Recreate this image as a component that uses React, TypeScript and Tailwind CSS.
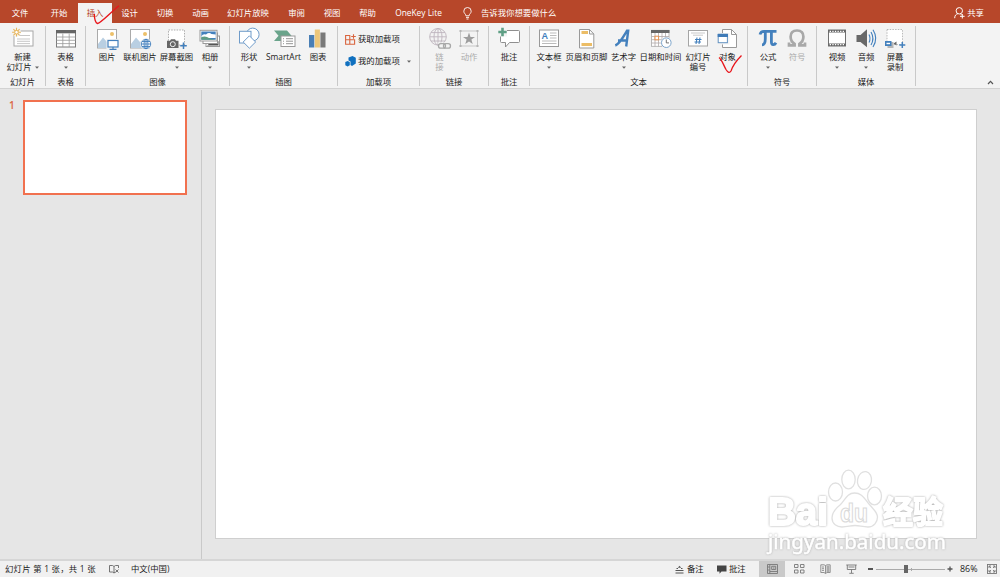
import type { ReactNode } from "react";

const GRAY = "#7b7b7b";
const BLUE = "#4380bd";

function Icon({ children }: { children: ReactNode }) {
  return (
    <svg width="32" height="24" viewBox="0 0 32 24" fill="none" className="block shrink-0">
      {children}
    </svg>
  );
}

function Mountain() {
  return (
    <>
      <path d="M7 17 L12 10.5 L16 15 L18 13.5 L21 17 V21 H7Z" fill="#b9cfe2" />
      <circle cx="21" cy="7" r="2" fill="#ecc069" />
    </>
  );
}

const icons = {
  newSlide: (
    <Icon>
      <rect x="7" y="4" width="19" height="15" fill="#fff" stroke="#a8a8a8" />
      <path d="M12 8.5H23M10 12H23M10 14.3H23M10 16.6H23" stroke="#b9b9b9" strokeWidth=".8" />
      <circle cx="9.5" cy="5.2" r="4.5" fill="#f3f3f3" />
      <path d="M9.5 .8V9.6M5.1 5.2H13.9M6.4 2.1L12.6 8.3M12.6 2.1L6.4 8.3" stroke="#e8b55a" strokeWidth="1.1" />
      <circle cx="9.5" cy="5.2" r="1.8" fill="#fff" stroke="#e8b55a" />
    </Icon>
  ),
  table: (
    <Icon>
      <rect x="6.5" y="3.5" width="19" height="16.5" fill="#fff" stroke={GRAY} />
      <path d="M6 3H26V6.3H6Z" fill="#666" />
      <path d="M6.5 10H25.5M6.5 13.3H25.5M6.5 16.6H25.5M12.8 6.5V20M19.2 6.5V20" stroke="#999" strokeWidth=".8" />
    </Icon>
  ),
  picture: (
    <Icon>
      <rect x="6.5" y="2.5" width="19" height="18.5" fill="#fff" stroke="#aaa" />
      <Mountain />
      <rect x="15.5" y="12" width="13" height="11" fill="#f3f3f3" />
      <rect x="17" y="13.5" width="10" height="6.5" fill="#fff" stroke={BLUE} strokeWidth="1.2" />
      <path d="M22 20V22M18.5 22.3H25.5" stroke={BLUE} strokeWidth="1.2" />
    </Icon>
  ),
  online: (
    <Icon>
      <rect x="6.5" y="2.5" width="19" height="18.5" fill="#fff" stroke="#aaa" />
      <Mountain />
      <circle cx="22" cy="17" r="5.8" fill="#f3f3f3" />
      <g stroke={BLUE} strokeWidth=".9" transform="translate(0 -.5)">
        <circle cx="22" cy="17.5" r="4.7" fill="#fff" />
        <ellipse cx="22" cy="17.5" rx="2" ry="4.7" />
        <path d="M17.3 17.5H26.7M18 15H26M18 20H26M22 12.8V22.2" />
      </g>
    </Icon>
  ),
  screenshot: (
    <Icon>
      <rect x="7.5" y="3" width="16" height="15" fill="#fff" stroke="#999" strokeDasharray="1.5 1.2" strokeWidth=".8" />
      <path d="M6 13.7H9L10 12.3H14L15 13.7H17.5V21H6Z" fill="#666" />
      <circle cx="11.8" cy="17.2" r="2.5" fill="#666" stroke="#f3f3f3" />
      <path d="M22.5 15.5V22M19.2 18.8H25.8" stroke={BLUE} strokeWidth="1.5" />
    </Icon>
  ),
  album: (
    <Icon>
      <rect x="12" y="9" width="13.5" height="10.5" fill="#fff" stroke="#999" />
      <path d="M13 18.5L18 14.5L21 17L24.5 14V18.5Z" fill="#555" />
      <rect x="9" y="6" width="14.5" height="10.5" fill="#fff" stroke="#999" />
      <rect x="6" y="3.3" width="17" height="10.7" fill="#fff" stroke="#999" />
      <rect x="7.3" y="4.5" width="14.4" height="8.2" fill={BLUE} />
      <path d="M7.5 9Q9 6.5 12 7.5Q15 4.8 17.5 7L21.7 7.5V11H7.3Z" fill="#fff" />
      <path d="M7.3 12.7V10Q12 8.5 15 11Q18 12 21.7 12.7Z" fill="#5f9b83" />
    </Icon>
  ),
  shapes: (
    <Icon>
      <g fill="#fff" stroke="#6f9bc9">
        <circle cx="19.7" cy="7.5" r="6.4" />
        <rect x="6.5" y="4.3" width="11.5" height="11.7" />
        <path d="M16.4 8.8L22.6 15L16.4 21.2L10.2 15Z" />
      </g>
    </Icon>
  ),
  smartArt: (
    <Icon>
      <path d="M6 3.5H19L23.5 8.7L19 14H6L10.5 8.7Z" fill="#6aa48b" />
      <rect x="13" y="9" width="14" height="10.5" fill="#fff" stroke="#999" />
      <path d="M15 11.7H16M18 11.7H25M15 14.2H16M18 14.2H25M15 16.7H16M18 16.7H25" stroke="#888" strokeWidth=".9" />
    </Icon>
  ),
  chart: (
    <Icon>
      <path d="M7 8H12.3V20.5H7Z" fill="#4a7fb5" />
      <path d="M12.8 2.5H17.9V20.5H12.8Z" fill="#edc77a" />
      <path d="M18.4 5.5H23.5V20.5H18.4Z" fill="#797979" />
    </Icon>
  ),
  link: (
    <Icon>
      <g stroke="#bdb4bd" strokeWidth=".9">
        <circle cx="14" cy="9.8" r="8.3" />
        <ellipse cx="14" cy="9.8" rx="4" ry="8.3" />
        <path d="M5.7 9.8H22.3M7 5.6H21M7 14H21M14 1.5V18.1" />
      </g>
      <path d="M14 15.5H27V22H14Z" fill="#f3f3f3" />
      <rect x="14.5" y="16.7" width="7" height="4.4" rx="2.2" stroke="#a8a8a8" strokeWidth="1.3" />
      <rect x="19.5" y="16.7" width="7" height="4.4" rx="2.2" stroke="#a8a8a8" strokeWidth="1.3" />
    </Icon>
  ),
  action: (
    <Icon>
      <rect x="7.5" y="4" width="17" height="15" stroke="#bbb" strokeWidth=".8" />
      <path d="M6.5 3h2v2h-2zM23.5 3h2v2h-2zM6.5 18h2v2h-2zM23.5 18h2v2h-2z" fill="#b5b5b5" />
      <path transform="translate(0 -.7)" d="M16 6.3L17.5 10.6H22L18.4 13.3L19.7 17.7L16 15.1L12.3 17.7L13.6 13.3L10 10.6H14.5Z" fill="#9d9d9d" />
    </Icon>
  ),
  comment: (
    <Icon>
      <path d="M8.5 3.5H25.5Q26.5 3.5 26.5 4.5V14.5Q26.5 15.5 25.5 15.5H16.5L12.5 20V15.5H8.5Q7.5 15.5 7.5 14.5V4.5Q7.5 3.5 8.5 3.5Z" fill="#fff" stroke="#8f8f8f" />
      <path d="M5 0H14V9.5H5Z" fill="#f3f3f3" />
      <path d="M9.5 .8V9.2M5.3 5H13.7" stroke="#5f9f85" strokeWidth="2.6" />
    </Icon>
  ),
  textBox: (
    <Icon>
      <rect x="6.5" y="3" width="19" height="16.5" fill="#fff" stroke="#999" />
      <text x="8.5" y="12.3" fontSize="9" fontFamily="Liberation Sans" fill={BLUE} fontWeight="bold">A</text>
      <path d="M17 6H23.5M17 8.5H23.5M17 11H23.5M9 14H23.5M9 16.5H23.5" stroke="#aaa" strokeWidth=".8" />
    </Icon>
  ),
  header: (
    <Icon>
      <path d="M8.5 2.5H18.5L22.8 7V21H8.5Z" fill="#fff" stroke="#999" />
      <path d="M18.5 2.5V7H22.8" stroke="#999" />
      <path d="M10.5 4H17V7H10.5ZM10.5 16H21V19H10.5Z" fill="#ecbd66" />
    </Icon>
  ),
  wordArt: (
    <Icon>
      <path d="M7.3 18.5C11.5 17 15.5 9.5 19 3.7H20.2L18.2 19.5M10 13.5H19" stroke={BLUE} strokeWidth="2.4" />
    </Icon>
  ),
  date: (
    <Icon>
      <rect x="6.5" y="3.3" width="17.5" height="16" fill="#fff" stroke="#aaa" strokeWidth=".8" />
      <path d="M6 3H24.5V6H6Z" fill="#666" />
      <path d="M6.5 9.5H24M6.5 12.7H24M6.5 16H24M10 6V19.5M13.5 6V19.5M17 6V19.5M20.5 6V19.5" stroke="#b0a8a8" strokeWidth=".8" />
      <rect x="10" y="9.2" width="3.6" height="3.6" fill="#fff" stroke="#e7924f" />
      <circle cx="21.3" cy="15.7" r="5.6" fill="#f3f3f3" />
      <circle cx="21.3" cy="15.7" r="4.8" fill="#fff" stroke="#7ea6cc" />
      <path d="M21.3 12.5V15.9H24" stroke="#666" strokeWidth=".9" />
    </Icon>
  ),
  slideNumber: (
    <Icon>
      <rect x="6.5" y="3.5" width="19" height="15.5" fill="#fff" stroke="#a5a5a5" />
      <path d="M9 6H23M11 8.2H21" stroke="#bbb" strokeWidth=".8" />
      <path d="M15 10.5L14 17M18 10.5L17 17M13 12.5H19.5M12.5 15H19" stroke={BLUE} strokeWidth="1.1" />
    </Icon>
  ),
  object: (
    <Icon>
      <path d="M10.5 2.5H19.5L24.5 7.5V20.5H10.5Z" fill="#fff" stroke="#999" />
      <path d="M19.5 2.5V7.5H24.5" stroke="#999" />
      <rect x="5.5" y="7" width="11" height="9.5" fill="#fff" stroke="#f3f3f3" strokeWidth="2" />
      <rect x="6.2" y="7.3" width="9.2" height="8.4" fill="#fff" stroke="#6291c0" />
      <path d="M5.7 6.9H16V10H5.7Z" fill="#3f7bb8" />
    </Icon>
  ),
  pi: (
    <Icon>
      <path d="M8 7.5C8.6 4.8 9.8 4.3 12 4.3H24.5M13.3 4.5V11.5C13.3 16 12.5 17.9 10 17.9M19.4 4.5V15C19.4 18.3 22.5 18.5 24 15.8" stroke={BLUE} strokeWidth="2.8" />
    </Icon>
  ),
  omega: (
    <Icon>
      <path transform="translate(0 -.5)" d="M8 16V18.9H13.6V17.4C10.5 15.4 9.6 13 9.6 10.2C9.6 6.3 12.1 4 16 4S22.4 6.3 22.4 10.2C22.4 13 21.5 15.4 18.4 17.4V18.9H24V16" stroke="#a9a9a9" strokeWidth="2.7" />
    </Icon>
  ),
  video: (
    <Icon>
      <rect x="7.5" y="3" width="17" height="16" fill="#fff" stroke="#707070" />
      <path d="M7.5 4.3H24.5M7.5 17.7H24.5" stroke="#666" strokeWidth="2.5" />
      <path d="M8.7 4.3H24M8.7 17.7H24" stroke="#fff" strokeWidth="1.3" strokeDasharray="1.3 1.3" />
    </Icon>
  ),
  audio: (
    <Icon>
      <path d="M6.5 8H10.5L17 2.3V20.3L10.5 15H6.5Z" fill="#686868" />
      <path d="M19 7.5Q21 11.5 19 15.5M21 5Q24.8 11.5 21 18M23 2.8Q28.5 11.5 23 20" stroke={BLUE} strokeWidth="1.1" />
    </Icon>
  ),
  record: (
    <Icon>
      <rect x="8" y="2.5" width="15.5" height="15" fill="#fff" stroke="#aaa" strokeDasharray="1.5 1.2" strokeWidth=".8" />
      <path d="M8.5 15H14.5V21H8.5Z" fill="#b5b5b5" />
      <path d="M6 14H12.5V19H6Z" fill={BLUE} />
      <path d="M7.5 15.8H11V17.2H7.5Z" fill="#fff" />
      <path d="M14.5 16.5L17.5 14.5V18.5Z" fill="#666" />
      <path d="M23.3 15V21M20.3 18H26.3" stroke={BLUE} strokeWidth="1.5" />
    </Icon>
  ),
};

function Caret() {
  return (
    <svg width="4" height="3" viewBox="0 0 4 3" className="inline-block shrink-0">
      <path d="M0 .4H4L2 2.7Z" fill="#666" />
    </svg>
  );
}

type ToolProps = {
  w: string;
  icon: ReactNode;
  label: string;
  sub?: string;
  caret?: boolean;
  muted?: boolean;
};

function Tool({ w, icon, label, sub, caret, muted }: ToolProps) {
  return (
    <button className={`flex shrink-0 flex-col items-center whitespace-nowrap ${w} ${muted ? "text-[#ababab]" : "text-[#222]"}`}>
      {icon}
      <span className="mt-px h-[10px] leading-[10px]">{label}</span>
      <span className="flex h-[10px] items-center gap-[3px] leading-[10px]">
        {sub}
        {caret && <Caret />}
      </span>
    </button>
  );
}

function Group({ w, label, children }: { w: string; label: string; children: ReactNode }) {
  return (
    <section className={`flex h-[60px] shrink-0 flex-col border-r border-[#c9c9c9] ${w}`}>
      <div className="flex h-[50px] shrink-0 justify-center pt-px">{children}</div>
      <div className="flex h-[12px] shrink-0 items-center justify-center pt-px text-[#222]">{label}</div>
    </section>
  );
}

function Ribbon() {
  return (
    <div className="flex h-[66px] shrink-0 items-start border-b border-[#d2d2d2] bg-[#f3f3f3] pt-[3px]">
      <Group w="w-[46px]" label="幻灯片">
        <Tool w="w-[44px]" icon={icons.newSlide} label="新建" sub="幻灯片" caret />
      </Group>
      <Group w="w-[40px]" label="表格">
        <Tool w="w-[38px]" icon={icons.table} label="表格" caret />
      </Group>
      <Group w="w-[144px]" label="图像">
        <Tool w="w-[32px]" icon={icons.picture} label="图片" />
        <Tool w="w-[34px]" icon={icons.online} label="联机图片" />
        <Tool w="w-[39px]" icon={icons.screenshot} label="屏幕截图" caret />
        <Tool w="w-[28px]" icon={icons.album} label="相册" caret />
      </Group>
      <Group w="w-[108px]" label="插图">
        <Tool w="w-[29px]" icon={icons.shapes} label="形状" caret />
        <Tool w="w-[40px]" icon={icons.smartArt} label="SmartArt" />
        <Tool w="w-[29px]" icon={icons.chart} label="图表" />
      </Group>
      <Group w="w-[82px]" label="加载项">
        <div className="flex w-full flex-col gap-[11px] pt-[7px] pl-[7px] text-[#222]">
          <div className="flex h-[11px] items-center gap-[2px]">
            <svg width="11" height="11" viewBox="0 0 11 11" fill="none" stroke="#d9653f" strokeWidth="1.1">
              <path d="M.6 1.5H4.8V10.2H.6ZM.6 5.8H9.6V10.2H4.8M8.5 .3V4.8M6.2 2.5H10.8" />
            </svg>
            <span>获取加载项</span>
          </div>
          <div className="flex h-[11px] items-center gap-[2px]">
            <svg width="11" height="11" viewBox="0 0 11 11">
              <path d="M3.5 1.5L7.5 0L10.8 1.8V7.5L7 10L5.5 9V5.5L3.5 4.5Z" fill="#1070bf" />
              <path d="M.3 6L2.6 5L4.8 6V9.3L2.6 10.5L.3 9.3Z" fill="#1070bf" />
            </svg>
            <span>我的加载项</span>
            <span className="ml-[5px] flex"><Caret /></span>
          </div>
        </div>
      </Group>
      <Group w="w-[69px]" label="链接">
        <Tool w="w-[30px]" icon={icons.link} label="链" sub="接" muted />
        <Tool w="w-[29px]" icon={icons.action} label="动作" muted />
      </Group>
      <Group w="w-[41px]" label="批注">
        <Tool w="w-[38px]" icon={icons.comment} label="批注" />
      </Group>
      <Group w="w-[218px]" label="文本">
        <Tool w="w-[29px]" icon={icons.textBox} label="文本框" caret />
        <Tool w="w-[46px]" icon={icons.header} label="页眉和页脚" />
        <Tool w="w-[28px]" icon={icons.wordArt} label="艺术字" caret />
        <Tool w="w-[46px]" icon={icons.date} label="日期和时间" />
        <Tool w="w-[29px]" icon={icons.slideNumber} label="幻灯片" sub="编号" />
        <Tool w="w-[30px]" icon={icons.object} label="对象" />
      </Group>
      <Group w="w-[69px]" label="符号">
        <Tool w="w-[30px]" icon={icons.pi} label="公式" caret />
        <Tool w="w-[28px]" icon={icons.omega} label="符号" muted />
      </Group>
      <Group w="w-[99px]" label="媒体">
        <Tool w="w-[29px]" icon={icons.video} label="视频" caret />
        <Tool w="w-[29px]" icon={icons.audio} label="音频" caret />
        <Tool w="w-[29px]" icon={icons.record} label="屏幕" sub="录制" />
      </Group>
      <svg width="7" height="5" viewBox="0 0 7 5" className="mt-[54px] mr-[6px] ml-auto" fill="none">
        <path d="M1 4L3.5 1.3L6 4" stroke="#555" strokeWidth="1.2" />
      </svg>
    </div>
  );
}

const tabs = [
  { label: "文件", w: "w-[40px]" },
  { label: "开始", w: "w-[38px]" },
  { label: "插入", w: "w-[34px]", active: true },
  { label: "设计", w: "w-[35px]" },
  { label: "切换", w: "w-[36px]" },
  { label: "动画", w: "w-[35px]" },
  { label: "幻灯片放映", w: "w-[60px]" },
  { label: "审阅", w: "w-[37px]" },
  { label: "视图", w: "w-[34px]" },
  { label: "帮助", w: "w-[37px]" },
  { label: "OneKey Lite", w: "w-[65px]" },
];

function TabBar() {
  return (
    <nav className="flex h-[23px] shrink-0 items-end bg-[#b7472a] text-white">
      {tabs.map((t) => (
        <div
          key={t.label}
          className={`flex h-[20px] shrink-0 items-center justify-center whitespace-nowrap ${t.w} ${t.active ? "bg-[#f3f3f3] text-[#b7472a]" : ""}`}
        >
          {t.label}
        </div>
      ))}
      <div className="ml-[12px] flex h-[20px] items-center gap-[9px]">
        <svg width="9" height="13" viewBox="0 0 9 13" fill="none" stroke="#fff" strokeWidth=".9">
          <path d="M2.9 8.8C2.9 7 .8 6.4 .8 4.2A3.7 3.7 0 0 1 8.2 4.2C8.2 6.4 6.1 7 6.1 8.8ZM3 10.4H6M3.5 12H5.5" />
        </svg>
        <span>告诉我你想要做什么</span>
      </div>
      <div className="mr-[16px] ml-auto flex h-[20px] items-center gap-[2px]">
        <svg width="11" height="12" viewBox="0 0 11 12" fill="none" stroke="#fff" strokeWidth="1">
          <circle cx="5.3" cy="3.8" r="3.2" />
          <path d="M.7 11.2C.7 8.5 2 7 4 6.6M6.3 6.8L7.7 7.8M8.3 7V11.5M6 9.3H10.6" />
        </svg>
        <span>共享</span>
      </div>
    </nav>
  );
}

function Watermark() {
  return (
    <svg width="190" height="95" viewBox="762 464 190 95" className="absolute top-[464px] left-[762px]">
      <g fill="#fff" fillOpacity=".85" stroke="#e0e0e0" strokeWidth="1.3">
        <ellipse cx="835.5" cy="492" rx="7" ry="9" />
        <ellipse cx="848.5" cy="479.5" rx="6.7" ry="9.3" />
        <ellipse cx="864.5" cy="480.5" rx="7" ry="9" transform="rotate(10 864.5 480.5)" />
        <ellipse cx="874.5" cy="496" rx="7" ry="8.8" />
        <path d="M854.5 493C847 493 845 500 840 505C835 509 832 513 832 518C832 524 837 527 842 527C848 527 850 525.5 855 525.5C860 525.5 862 527 868 527C874 527 877.5 522 877.5 517C877.5 512 873 509 869 504C864 498 862 493 854.5 493Z" />
      </g>
      <g
        fontFamily="Liberation Sans"
        fontWeight="bold"
        fill="#fff"
        stroke="#fff"
        strokeLinejoin="round"
        className="[filter:drop-shadow(0_0_0.8px_#a8a8a8)]"
      >
        <text x="768" y="525" fontSize="39" strokeWidth="2" textLength="60" lengthAdjust="spacingAndGlyphs">Bai</text>
        <text x="883" y="523" fontSize="31" strokeWidth="1.8" textLength="60" lengthAdjust="spacingAndGlyphs" fontFamily="Noto Sans CJK SC">经验</text>
      </g>
      <text x="840" y="522" fontSize="25" fontFamily="Liberation Sans" fontWeight="bold" textLength="28" lengthAdjust="spacingAndGlyphs" fill="#fff" stroke="#dadada" strokeWidth="1.1">du</text>
      <text
        x="768"
        y="549"
        fontSize="20"
        textLength="178"
        lengthAdjust="spacingAndGlyphs"
        fontFamily="Noto Sans"
        fill="#fff"
        stroke="#fff"
        strokeWidth=".5"
        className="[filter:drop-shadow(0_0_0.8px_#b0b0b0)]"
      >
        jingyan.baidu.com
      </text>
    </svg>
  );
}

function StatusBar() {
  return (
    <footer className="flex h-[18px] shrink-0 items-center border-t-2 border-[#d6d6d6] bg-[#f1f1f1] pl-[5px] whitespace-nowrap text-[#222]">
      <span className="w-[104px] tracking-[0.22px]">幻灯片 第 1 张，共 1 张</span>
      <svg width="10" height="9" viewBox="0 0 10 9" fill="none" stroke="#666" strokeWidth=".9">
        <path d="M5 1.5V8L3.5 7H.5V.5H3.5L5 1.5L6.5 .5H9.5V3M5 8L6.5 7M6.5 4.5L9.5 7.5M9.5 4.5L6.5 7.5" />
      </svg>
      <span className="ml-[12px]">中文(中国)</span>
      <div className="ml-auto flex h-full items-center">
        <svg width="9" height="9" viewBox="0 0 9 9" fill="none" stroke="#555" strokeWidth="1">
          <path d="M.5 5.5H8.5M.5 8H8.5M1.5 3.5H3M6 3.5H7.5" />
          <path d="M2.8 2.8L4.5 .7L6.2 2.8Z" fill="#555" stroke="none" />
        </svg>
        <span className="ml-[3px] w-[30px]">备注</span>
        <svg width="10" height="9" viewBox="0 0 10 9">
          <path d="M0 .5H9.5V6.5H4.5L2.5 8.8V6.5H0Z" fill="#444" />
        </svg>
        <span className="ml-[2px] w-[30px]">批注</span>
        <div className="flex h-full w-[26px] items-center justify-center bg-[#c9c9c9]">
          <svg width="11" height="10" viewBox="0 0 11 10" fill="none" stroke="#777" strokeWidth=".9">
            <path d="M.5 .5H10.5V9.5H.5ZM2.8 .5V9.5M2.8 7.5H10.5M.5 3H2.8M.5 6H2.8M4.7 2.3H8.7V5.5H4.7ZM6 4H7.5" />
          </svg>
        </div>
        <svg width="11" height="10" viewBox="0 0 11 10" fill="none" stroke="#777" strokeWidth=".9" className="ml-[9px]">
          <path d="M.5 .5H4V3.5H.5ZM6.5 .5H10V3.5H6.5ZM.5 6H4V9H.5ZM6.5 6H10V9H6.5Z" />
        </svg>
        <svg width="11" height="10" viewBox="0 0 11 10" fill="none" stroke="#888" strokeWidth=".9" className="ml-[15px]">
          <path d="M5.5 1.5V9.5M5.5 1.5L4 .8H.8V8.5H4L5.5 9.5L7 8.5H10.2V.8H7ZM2 3H4M2 4.7H4M2 6.4H4" />
          <path d="M6.5 1.5H9.5V8H6.5Z" fill="#aaa" stroke="none" />
        </svg>
        <svg width="11" height="10" viewBox="0 0 11 10" fill="none" stroke="#777" strokeWidth=".9" className="ml-[15px]">
          <path d="M.3 1H10.7M1.3 1V5.5H9.7V1M5.5 5.5V9M3.3 9.3H7.7M2.5 3H8.5" />
        </svg>
        <span className="ml-[11px] h-[1.5px] w-[5px] bg-[#555]" />
        <div className="ml-[3px] flex w-[69px] items-center">
          <span className="h-px w-[28px] bg-[#aaa]" />
          <span className="h-[8px] w-[4px] bg-[#666]" />
          <span className="h-px w-[3px] bg-[#aaa]" />
          <span className="h-[3px] w-px bg-[#aaa]" />
          <span className="h-px w-[33px] bg-[#aaa]" />
        </div>
        <svg width="6" height="6" viewBox="0 0 6 6" className="ml-[2px]">
          <path d="M3 .5V5.5M.5 3H5.5" stroke="#555" strokeWidth="1.3" />
        </svg>
        <span className="ml-[7px] w-[27px] text-[8.9px]">86%</span>
        <svg width="10" height="10" viewBox="0 0 10 10" fill="none" stroke="#777" strokeWidth=".9" className="mr-[3px]">
          <rect x=".5" y=".5" width="9" height="9" />
          <path d="M2 4V2H4M6 2H8V4M8 6V8H6M4 8H2V6M2 2L4 4M8 2L6 4M8 8L6 6M2 8L4 6" />
        </svg>
      </div>
    </footer>
  );
}

export default function App() {
  return (
    <div className="relative flex h-[577px] w-[1000px] flex-col overflow-hidden bg-[#e6e6e6] font-['Open_Sans','Noto_Sans_CJK_SC',sans-serif] text-[8.4px] leading-none">
      <TabBar />
      <Ribbon />
      <main className="flex min-h-0 flex-1">
        <aside className="mt-px flex w-[202px] shrink-0 items-start border-r border-[#c9c9c9] pt-[10px]">
          <span className="w-[23px] pl-[9px] text-[10px] leading-[10px] font-semibold text-[#dc6847]">1</span>
          <div className="h-[95px] w-[164px] border-2 border-[#f1714f] bg-white" />
        </aside>
        <div className="flex-1 pt-[20px] pl-[13px]">
          <div className="h-[430px] w-[762px] border border-[#cfcfcf] bg-white" />
        </div>
      </main>
      <StatusBar />
      <Watermark />
      <svg width="30" height="24" viewBox="92 2 30 24" fill="none" className="absolute top-[2px] left-[92px]">
        <path d="M94.3 14C94.5 19 95 23 97.5 23.5C101 23 110 13 119 5.7" stroke="#e8151b" strokeWidth="1.4" />
      </svg>
      <svg width="28" height="22" viewBox="716 53 28 22" fill="none" className="absolute top-[53px] left-[716px]">
        <path d="M719 57.5C722 60 723 64 726 69.5Q729 74.5 731 71C733 65 737 60 741.5 55.5" stroke="#e8151b" strokeWidth="1.3" />
      </svg>
    </div>
  );
}
